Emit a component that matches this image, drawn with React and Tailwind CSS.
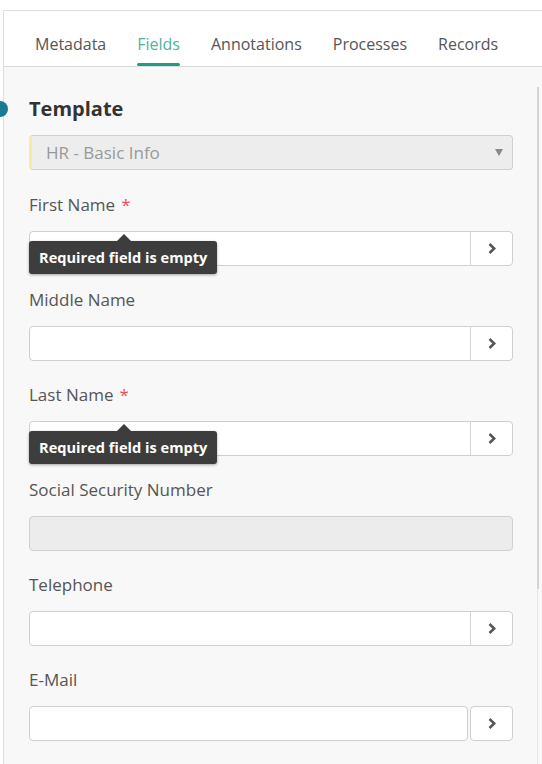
import React from 'react';

const tabs = ['Metadata', 'Fields', 'Annotations', 'Processes', 'Records'];

const fields = [
  { label: 'First Name', required: true, error: true },
  { label: 'Middle Name' },
  { label: 'Last Name', required: true, error: true },
  { label: 'Social Security Number', disabled: true },
  { label: 'Telephone' },
  { label: 'E-Mail', split: true },
];

function Chevron() {
  return (
    <svg width="10" height="13" viewBox="0 0 10 13" fill="none">
      <path d="M2.5 2 L7.2 6.5 L2.5 11" stroke="#555" strokeWidth="2.5" />
    </svg>
  );
}

function Tooltip() {
  return (
    <div className="absolute left-0 top-[10px] z-10">
      <div className="absolute left-[88px] top-[-7px] w-0 h-0 border-l-[7px] border-r-[7px] border-b-[7px] border-l-transparent border-r-transparent border-b-[#3d3d3d]" />
      <div className="h-[33px] px-[10px] flex items-center rounded-[3px] bg-[#3d3d3d] text-white text-[14.6px] font-bold shadow-[0_1px_3px_rgba(0,0,0,0.35)] whitespace-nowrap">
        Required field is empty
      </div>
    </div>
  );
}

function Field({ field }) {
  return (
    <div className="mb-[22px]">
      <div className="h-[24px] mb-[14px] flex items-center text-[17px] text-[#555]">
        {field.label}
        {field.required && <span className="ml-[6px] text-[#e8505b]">*</span>}
      </div>
      <div className="relative">
        {field.disabled ? (
          <div className="h-[35px] rounded-[4px] border border-[#d0d0d0] bg-[#ececec]" />
        ) : field.split ? (
          <div className="flex h-[35px] gap-[2px]">
            <div className="flex-1 rounded-[4px] border border-[#cfcfcf] bg-white" />
            <div className="w-[43px] flex items-center justify-center rounded-[4px] border border-[#cfcfcf] bg-white">
              <Chevron />
            </div>
          </div>
        ) : (
          <div className="flex h-[35px] rounded-[4px] border border-[#cfcfcf] bg-white">
            <div className="flex-1" />
            <div className="w-[42px] flex items-center justify-center border-l border-[#d6d6d6]">
              <Chevron />
            </div>
          </div>
        )}
        {field.error && <Tooltip />}
      </div>
    </div>
  );
}

export default function App() {
  return (
    <div className="w-[542px] h-[764px] overflow-hidden bg-white" style={{ fontFamily: '"Open Sans", "Liberation Sans", sans-serif' }}>
      <div className="h-[10px]" />
      <div className="relative h-[754px] ml-[3px] border-t border-l border-[#dedede] flex flex-col">
        <div className="h-[56px] shrink-0 bg-white border-b border-[#dcdcdc] flex items-end pl-[24px]">
          {tabs.map((t) => (
            <div key={t} className="mr-[17px] px-[7px] flex flex-col items-center">
              <span className={`text-[16px] leading-[22px] ${t === 'Fields' ? 'text-[#4fb39e]' : 'text-[#555]'}`}>{t}</span>
              <div className={`mt-[8px] h-[3px] w-full rounded-full ${t === 'Fields' ? 'bg-[#1e9e84]' : 'bg-transparent'}`} />
            </div>
          ))}
        </div>
        <div className="flex-1 flex bg-[#f8f8f8]">
          <div className="flex-1 pl-[25px] pr-[24px] pt-[28px]">
            <div className="relative h-[28px] flex items-center text-[20px] font-bold text-[#333]">
              <span className="absolute left-[-37px] top-[6px] w-[16px] h-[16px] rounded-full bg-[#1a7a94]" />
              Template
            </div>
            <div className="mt-[12px] mb-[23px] h-[35px] flex items-center rounded-[4px] border border-[#d0d0d0] border-l-[3px] border-l-[#f3eda2] bg-[#ededed] pl-[14px] pr-[9px]">
              <span className="flex-1 text-[17px] text-[#999]">HR - Basic Info</span>
              <svg width="8" height="7" viewBox="0 0 8 7">
                <path d="M0 0 H8 L4 7 Z" fill="#888" />
              </svg>
            </div>
            {fields.map((f) => (
              <Field key={f.label} field={f} />
            ))}
          </div>
          <div className="w-[5px] pt-[20px] flex flex-col">
            <div className="h-[502px] border-l-2 border-[#d4d4d4]" />
            <div className="flex-1 border-l border-[#e6e6e6]" />
          </div>
        </div>
      </div>
    </div>
  );
}
